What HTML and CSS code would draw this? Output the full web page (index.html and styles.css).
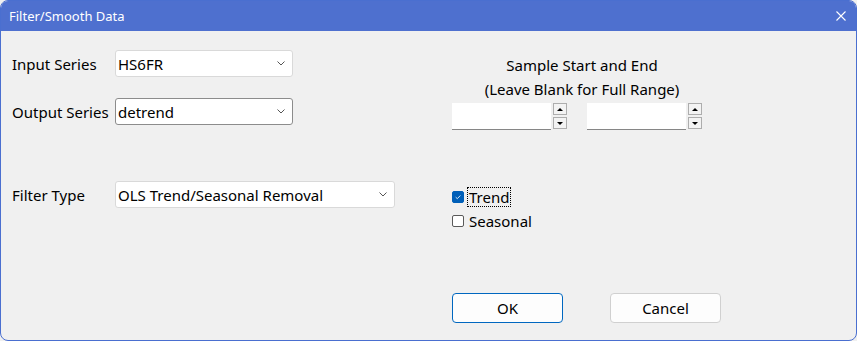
FILE: index.html
```html
<!DOCTYPE html>
<html lang="en">
<head>
    <meta charset="UTF-8">
    <title>Filter/Smooth Data</title>
    <link rel="stylesheet" href="styles.css">
</head>
<body>
    <div class="window">
        <div class="titlebar">
            <span class="title">Filter/Smooth Data</span>
            <svg class="close" viewBox="0 0 10 10">
                <path d="M0.5 0.5 L9.5 9.5 M9.5 0.5 L0.5 9.5" stroke="#fff" stroke-width="1.1" fill="none"/>
            </svg>
        </div>

        <div class="content">
            <div class="left">
                <div class="row row-input">
                    <span class="label">Input Series</span>
                    <div class="combo combo-short">
                        <span>HS6FR</span>
                        <svg class="chevron" viewBox="0 0 8 5"><path d="M0.5 0.5 L4 4 L7.5 0.5" stroke="#555" fill="none"/></svg>
                    </div>
                </div>
                <div class="row row-output">
                    <span class="label">Output Series</span>
                    <div class="combo combo-short combo-focus">
                        <span>detrend</span>
                        <svg class="chevron" viewBox="0 0 8 5"><path d="M0.5 0.5 L4 4 L7.5 0.5" stroke="#555" fill="none"/></svg>
                    </div>
                </div>
                <div class="row row-filter">
                    <span class="label">Filter Type</span>
                    <div class="combo combo-long">
                        <span>OLS Trend/Seasonal Removal</span>
                        <svg class="chevron" viewBox="0 0 8 5"><path d="M0.5 0.5 L4 4 L7.5 0.5" stroke="#555" fill="none"/></svg>
                    </div>
                </div>
            </div>

            <div class="right">
                <div class="sample-title">
                    Sample Start and End<br>
                    (Leave Blank for Full Range)
                </div>
                <div class="ranges">
                    <div class="spin-edit">
                        <div class="edit"></div>
                        <div class="spin">
                            <div class="spin-btn"><span class="tri-up"></span></div>
                            <div class="spin-btn"><span class="tri-down"></span></div>
                        </div>
                    </div>
                    <div class="spin-edit">
                        <div class="edit"></div>
                        <div class="spin">
                            <div class="spin-btn"><span class="tri-up"></span></div>
                            <div class="spin-btn"><span class="tri-down"></span></div>
                        </div>
                    </div>
                </div>

                <div class="checks">
                    <div class="check-row">
                        <span class="box checked">
                            <svg viewBox="0 0 12 12"><path d="M3.2 6.2 L5.2 8 L8.8 4.2" stroke="#fff" stroke-width="1" fill="none"/></svg>
                        </span>
                        <span class="check-text focused">Trend</span>
                    </div>
                    <div class="check-row">
                        <span class="box"></span>
                        <span class="check-text">Seasonal</span>
                    </div>
                </div>

                <div class="buttons">
                    <div class="btn btn-default">OK</div>
                    <div class="btn">Cancel</div>
                </div>
            </div>
        </div>
    </div>
</body>
</html>
```

FILE: styles.css
```css
* {
    margin: 0;
    padding: 0;
    box-sizing: border-box;
}

body {
    font-family: 'Noto Sans', 'Open Sans', sans-serif;
    font-size: 15px;
    color: #000;
    background: #f0f0f0;
}

.window {
    width: 857px;
    height: 341px;
    border: 1px solid #4a6fd0;
    border-radius: 8px;
    overflow: hidden;
    background: #f0f0f0;
}

.titlebar {
    height: 30px;
    background: #4e70cf;
    display: flex;
    align-items: center;
    justify-content: space-between;
    padding: 0 10px 0 8px;
}

.title {
    color: #fff;
    font-size: 13px;
}

.close {
    width: 10px;
    height: 10px;
    margin-top: -1px;
}

.content {
    display: flex;
}

/* left column: labels + combos */
.left {
    width: 451px;
    padding: 19px 0 0 11px;
}

.row {
    display: flex;
    align-items: center;
    height: 27px;
}

.row-output {
    margin-top: 21px;
}

.row-filter {
    margin-top: 56px;
}

.label {
    width: 103px;
}

.combo {
    height: 27px;
    background: #fff;
    border: 1px solid #d9d9d9;
    border-radius: 3px;
    display: flex;
    align-items: center;
    justify-content: space-between;
    padding: 0 7px 0 2px;
}

.combo-short {
    width: 178px;
}

.combo-long {
    width: 280px;
}

.combo-focus {
    border-color: #8c8c8c;
}

.chevron {
    width: 8px;
    height: 5px;
}

/* right column */
.right {
    display: flex;
    flex-direction: column;
}

.sample-title {
    width: 260px;
    text-align: center;
    line-height: 24px;
    margin-top: 22px;
}

.ranges {
    display: flex;
    gap: 20px;
    margin-top: 2px;
}

.spin-edit {
    display: flex;
    gap: 2px;
}

.edit {
    width: 99px;
    height: 27px;
    background: #fff;
    border-bottom: 1px solid #868686;
}

.spin {
    display: flex;
    flex-direction: column;
    gap: 2px;
}

.spin-btn {
    width: 14px;
    height: 12px;
    background: #f3f3f3;
    border: 1px solid #adadad;
    display: flex;
    align-items: center;
    justify-content: center;
}

.tri-up {
    border-left: 3px solid transparent;
    border-right: 3px solid transparent;
    border-bottom: 3px solid #000;
}

.tri-down {
    border-left: 3px solid transparent;
    border-right: 3px solid transparent;
    border-top: 3px solid #000;
}

.checks {
    margin-top: 57px;
    display: flex;
    flex-direction: column;
    gap: 4px;
}

.check-row {
    display: flex;
    align-items: center;
    height: 20px;
}

.box {
    width: 12px;
    height: 12px;
    border: 1px solid #5a5a5a;
    border-radius: 2px;
    background: #fff;
    margin-right: 3px;
}

.box svg {
    display: block;
    width: 10px;
    height: 10px;
}

.box.checked {
    background: #005fb8;
    border-color: #005fb8;
}

.check-text {
    padding: 0 1px;
    height: 20px;
    line-height: 19px;
    border: 1px dotted transparent;
}

.check-text.focused {
    border-color: #000;
}

.buttons {
    display: flex;
    gap: 47px;
    margin-top: 62px;
}

.btn {
    width: 111px;
    height: 30px;
    background: #fdfdfd;
    border: 1px solid #d0d0d0;
    border-radius: 4px;
    display: flex;
    align-items: center;
    justify-content: center;
}

.btn-default {
    border-color: #0067c0;
}
```
